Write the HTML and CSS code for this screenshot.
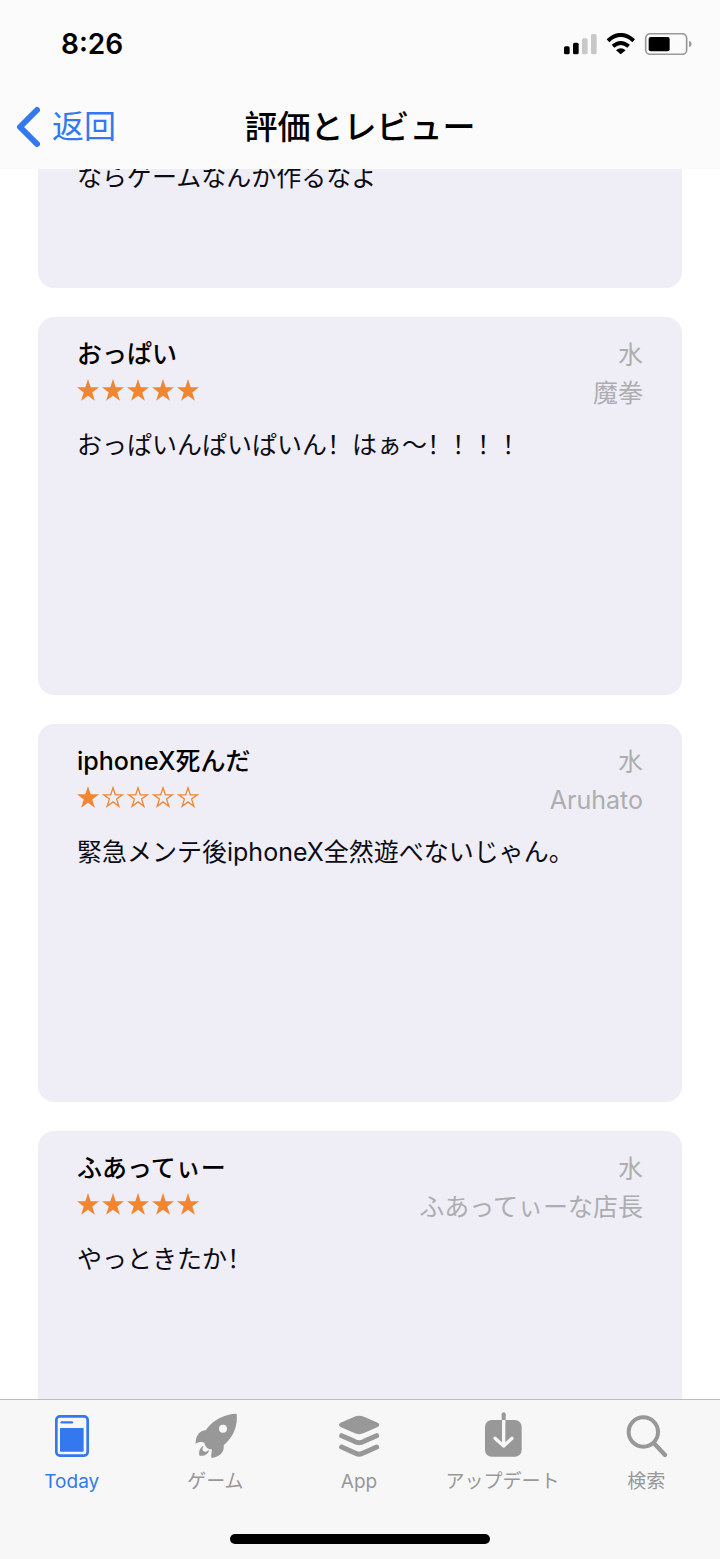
FILE: index.html
```html
<!DOCTYPE html>
<html lang="zh-Hans">
<head>
<meta charset="utf-8">
<meta name="viewport" content="width=device-width, initial-scale=1">
<title>評価とレビュー</title>
<link rel="stylesheet" href="styles.css">
</head>
<body>
<svg class="defs" aria-hidden="true">
  <symbol id="star" viewBox="0 0 22 22"><path d="M11 0 13.7 8.2H22L15.3 13.4 17.9 21.8 11 16.7 4.1 21.8 6.7 13.4 0 8.2H8.3Z" fill="currentColor"/></symbol>
  <symbol id="star-empty" viewBox="0 0 22 22"><path d="M11 1.8 13.3 8.8H20.4L14.6 13.1 16.9 20.3 11 15.9 5.1 20.3 7.4 13.1 1.6 8.8H8.7Z" fill="none" stroke="currentColor" stroke-width="1.3"/></symbol>
</svg>
<div class="app">
  <header class="header">
    <div class="status">
      <span class="time">8:26</span>
      <svg class="status-icons" viewBox="609 99 390 66" role="img" aria-label="電波、Wi-Fi、バッテリー">
        <rect x="612" y="139" width="17" height="24" rx="5"/>
        <rect x="639" y="128" width="17" height="35" rx="5"/>
        <rect x="666" y="115" width="17" height="48" rx="5" fill="#c8c8c8"/>
        <rect x="693" y="102" width="17" height="61" rx="5" fill="#c8c8c8"/>
        <path d="M744 122Q782 88 821 122" fill="none" stroke="#000" stroke-width="12"/>
        <path d="M759 139Q782 119 806 139" fill="none" stroke="#000" stroke-width="12"/>
        <path d="M768 151Q782 139 797 151L782 163Z"/>
        <rect x="857" y="101" width="123" height="62" rx="14" fill="none" stroke="#999" stroke-width="5"/>
        <rect x="866" y="111" width="63" height="43" rx="6"/>
        <path d="M987 122Q995 124 995 132T987 142Z" fill="#999"/>
      </svg>
    </div>
    <nav class="navbar">
      <a class="back" href="#">
        <svg class="chevron" viewBox="0 0 24 42" aria-hidden="true"><path d="M21 4 4 21 21 38" fill="none" stroke="currentColor" stroke-width="6" stroke-linecap="round" stroke-linejoin="round"/></svg>
        返回
      </a>
      <h1 class="page-title">評価とレビュー</h1>
    </nav>
  </header>

  <main class="reviews">
    <article class="card card-scrolled">
      <p class="body">ならゲームなんか作るなよ</p>
    </article>

    <article class="card">
      <div class="card-head">
        <div>
          <h2 class="title">おっぱい</h2>
          <div class="stars" role="img" aria-label="5つ星">
            <svg class="star"><use href="#star"/></svg><svg class="star"><use href="#star"/></svg><svg class="star"><use href="#star"/></svg><svg class="star"><use href="#star"/></svg><svg class="star"><use href="#star"/></svg>
          </div>
        </div>
        <div class="meta"><div>水</div><div>魔拳</div></div>
      </div>
      <p class="body">おっぱいんぱいぱいん！はぁ〜！！！！</p>
    </article>

    <article class="card">
      <div class="card-head">
        <div>
          <h2 class="title">iphoneX死んだ</h2>
          <div class="stars" role="img" aria-label="1つ星">
            <svg class="star"><use href="#star"/></svg><svg class="star"><use href="#star-empty"/></svg><svg class="star"><use href="#star-empty"/></svg><svg class="star"><use href="#star-empty"/></svg><svg class="star"><use href="#star-empty"/></svg>
          </div>
        </div>
        <div class="meta"><div>水</div><div>Aruhato</div></div>
      </div>
      <p class="body">緊急メンテ後iphoneX全然遊べないじゃん。</p>
    </article>

    <article class="card">
      <div class="card-head">
        <div>
          <h2 class="title">ふあってぃー</h2>
          <div class="stars" role="img" aria-label="5つ星">
            <svg class="star"><use href="#star"/></svg><svg class="star"><use href="#star"/></svg><svg class="star"><use href="#star"/></svg><svg class="star"><use href="#star"/></svg><svg class="star"><use href="#star"/></svg>
          </div>
        </div>
        <div class="meta"><div>水</div><div>ふあってぃーな店長</div></div>
      </div>
      <p class="body">やっときたか！</p>
    </article>
  </main>

  <footer class="tabbar">
    <nav class="tabs">
      <a class="tab tab-active" href="#" aria-current="page">
        <svg class="tab-icon" viewBox="147 66 132 144" aria-hidden="true">
          <rect x="166" y="79" width="94" height="118" rx="11" fill="none" stroke="currentColor" stroke-width="8"/>
          <path d="M182 97H213" stroke="currentColor" stroke-width="7" stroke-linecap="round"/>
          <rect x="177" y="114" width="71" height="71" rx="2" fill="currentColor"/>
        </svg>
        Today
      </a>
      <a class="tab" href="#">
        <svg class="tab-icon" viewBox="579 66 132 144" aria-hidden="true">
          <path fill="currentColor" fill-rule="evenodd" d="M708 71C677 72 640 87 617 121C598 121 586 140 587 161C594 156 605 155 613 158C615 171 625 178 635 178C637 186 631 197 635 204C657 200 674 188 671 166C697 144 714 112 710 73Q710 71 708 71ZM669 104A12 12 0 1 1 669 128A12 12 0 1 1 669 104Z"/>
          <path fill="currentColor" d="M611 167C598 172 595 190 599 197C612 199 626 193 627 179C622 184 616 187 611 184C606 180 607 172 611 167Z"/>
        </svg>
        ゲーム
      </a>
      <a class="tab" href="#">
        <svg class="tab-icon" viewBox="261 66 132 144" aria-hidden="true">
          <path fill="currentColor" d="M313 80Q327 74 342 80L383 98Q393 104 383 111L342 129Q327 136 313 129L272 111Q262 104 272 98Z"/>
          <path fill="none" stroke="currentColor" stroke-width="15" stroke-linecap="round" d="M275 137 313 154Q327 162 342 154L380 137M275 171 313 188Q327 197 342 188L380 171"/>
        </svg>
        App
      </a>
      <a class="tab" href="#">
        <svg class="tab-icon" viewBox="153 66 132 144" aria-hidden="true">
          <rect x="165" y="90" width="110" height="110" rx="20" fill="currentColor"/>
          <path d="M221 73V90" stroke="currentColor" stroke-width="12"/>
          <circle cx="221" cy="73" r="6" fill="currentColor"/>
          <path d="M221 95V167M195 145 221 168 246 145" fill="none" stroke="#f7f7f7" stroke-width="10" stroke-linecap="round" stroke-linejoin="round"/>
          <path d="M221 90V100" stroke="#f7f7f7" stroke-width="10"/>
        </svg>
        アップデート
      </a>
      <a class="tab" href="#">
        <svg class="tab-icon" viewBox="585 66 132 144" aria-hidden="true">
          <circle cx="643" cy="126" r="44" fill="none" stroke="currentColor" stroke-width="12"/>
          <path d="M675 160 708 195" stroke="currentColor" stroke-width="13" stroke-linecap="round"/>
        </svg>
        検索
      </a>
    </nav>
    <div class="home-bar"></div>
  </footer>
</div>
</body>
</html>
```
FILE: styles.css
```css
* {
  box-sizing: border-box;
}

body {
  margin: 0;
  background: #fff;
  color: #0c0b12;
  font-family: Inter, "Noto Sans CJK SC", "Noto Sans CJK JP", sans-serif;
}

h1, h2, p {
  margin: 0;
}

a {
  color: inherit;
  text-decoration: none;
}

.defs {
  position: absolute;
  width: 0;
  height: 0;
}

.app {
  display: flex;
  flex-direction: column;
  height: 100vh;
}

.header {
  flex: none;
  background: #fbfbfb;
}

.status {
  display: flex;
  align-items: center;
  justify-content: space-between;
  height: 88px;
  padding: 0 27px 0 61px;
}

.time {
  color: #000;
  font-size: 28px;
  font-weight: 600;
}

.status-icons {
  width: 130px;
  height: 22px;
}

.navbar {
  display: grid;
  grid-template-columns: 1fr auto 1fr;
  align-items: center;
  height: 81px;
  padding: 0 16px 3px;
}

.back {
  display: flex;
  align-items: center;
  gap: 12px;
  color: #3478f0;
  font-size: 32px;
  line-height: 42px;
}

.chevron {
  width: 24px;
  height: 42px;
}

.page-title {
  color: #000;
  font-size: 33px;
  font-weight: 500;
  line-height: 42px;
}

.reviews {
  display: flex;
  flex: 1;
  flex-direction: column;
  gap: 29px;
  min-height: 0;
  padding: 0 38px;
  overflow: hidden;
}

.card {
  flex: none;
  min-height: 378px;
  padding: 19px 39px;
  border-radius: 16px;
  background: #efeef6;
}

.card-scrolled {
  min-height: 150px;
  margin-top: -31px;
  padding-top: 23px;
}

.card-head {
  display: flex;
  justify-content: space-between;
  margin-bottom: 17px;
}

.title {
  color: #000;
  font-size: 25px;
  font-weight: 500;
  line-height: 36px;
}

.stars {
  display: flex;
  gap: 3px;
  margin-top: 7px;
  color: #f08632;
}

.star {
  width: 22px;
  height: 22px;
}

.meta {
  color: #adadb0;
  font-size: 25px;
  line-height: 38px;
  text-align: right;
}

.body {
  font-size: 25px;
  line-height: 32px;
}

.tabbar {
  flex: none;
  padding-bottom: 15px;
  border-top: 1px solid #bdbcc2;
  background: #f7f7f7;
}

.tabs {
  display: grid;
  grid-template-columns: repeat(5, 1fr);
  height: 134px;
  padding: 12px 2px 0 0;
}

.tab {
  display: flex;
  flex-direction: column;
  align-items: center;
  gap: 8px;
  color: #989898;
  font-size: 19px;
  line-height: 28px;
}

.tab-active {
  color: #3478f0;
}

.tab-icon {
  width: 44px;
  height: 48px;
}

.home-bar {
  width: 36%;
  height: 10px;
  margin: 0 auto;
  border-radius: 5px;
  background: #000;
}
```
